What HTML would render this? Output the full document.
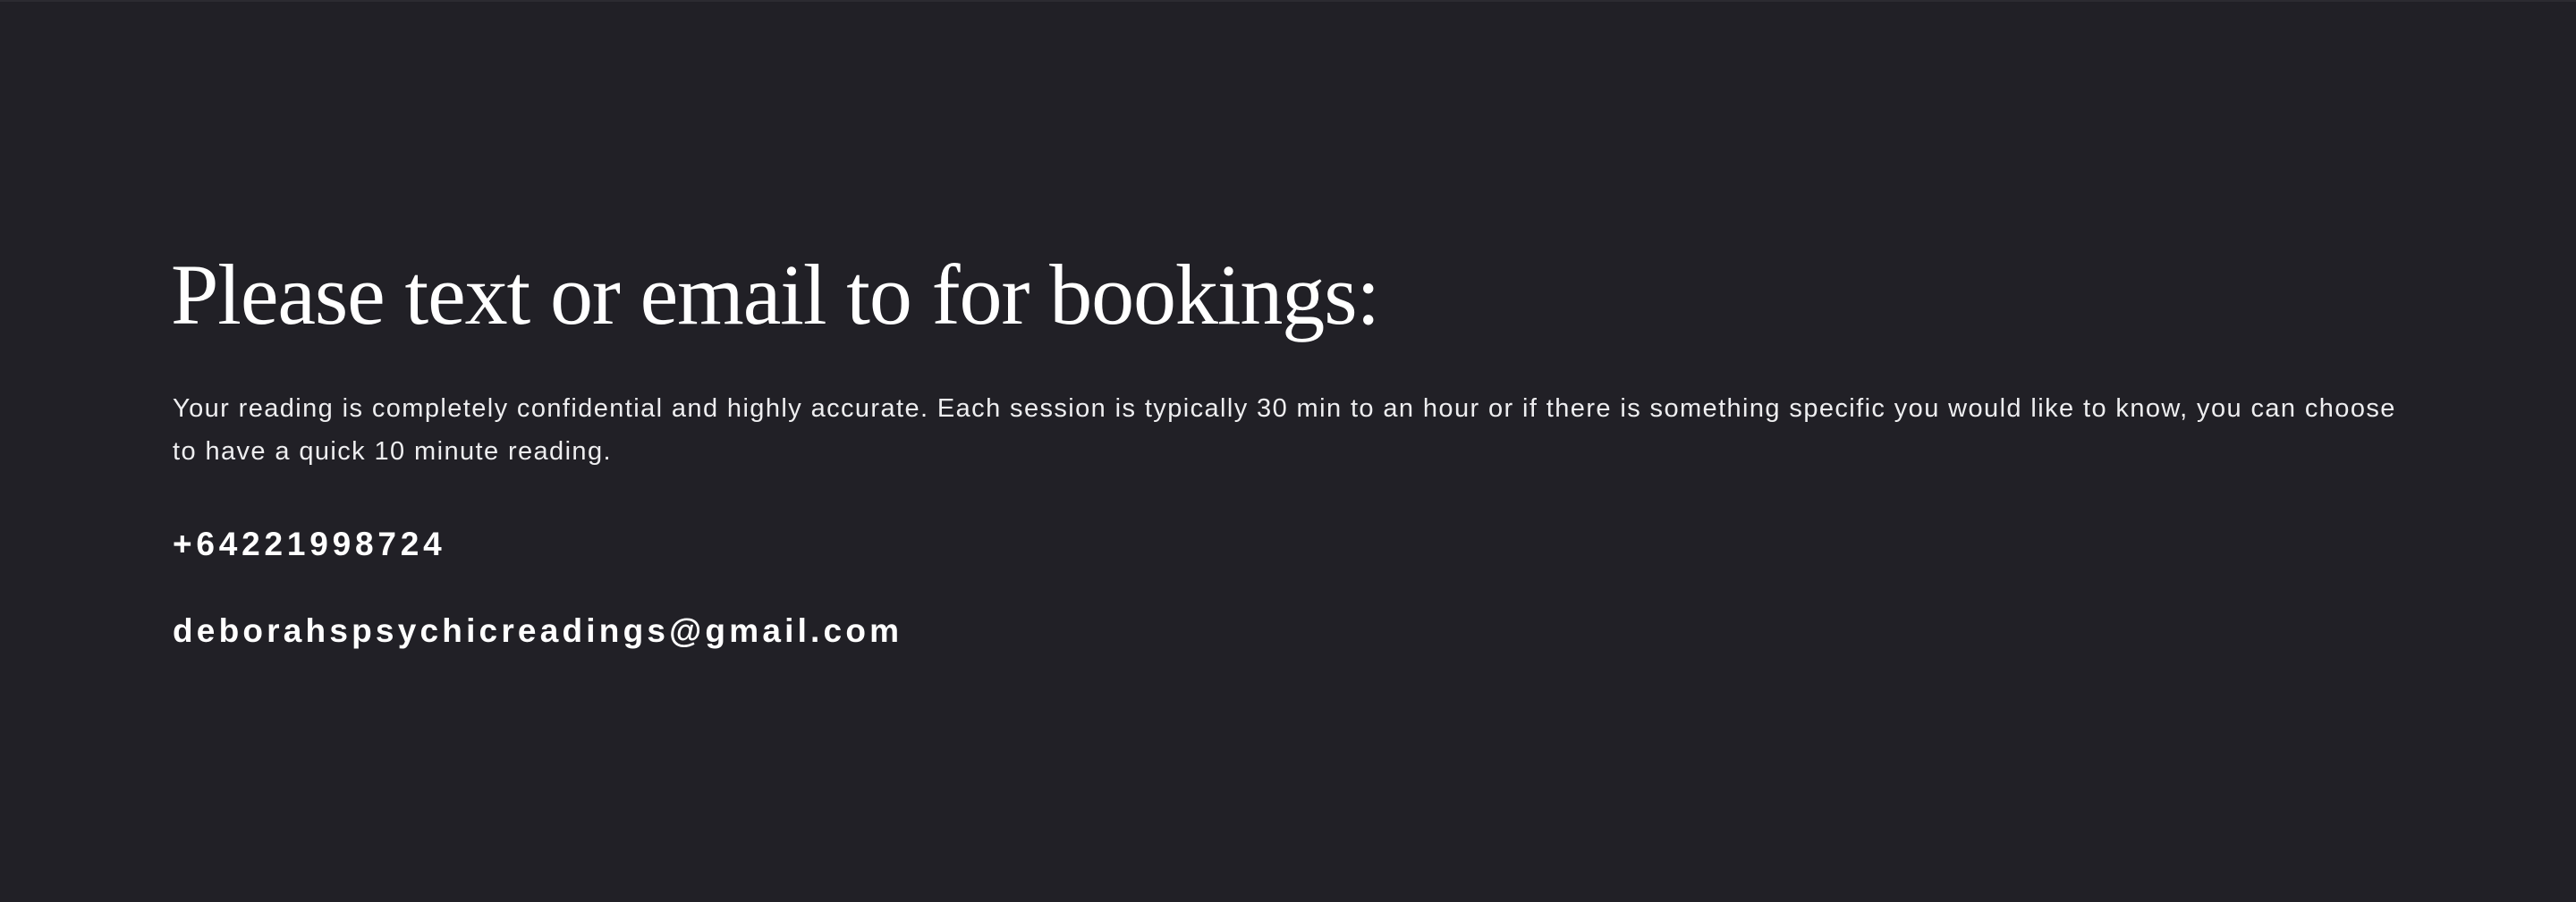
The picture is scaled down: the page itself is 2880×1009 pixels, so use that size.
<!DOCTYPE html>
<html><head><meta charset="utf-8"><style>
html,body{margin:0;padding:0;}
body{width:2880px;height:1009px;background:#212026;position:relative;overflow:hidden;color:#fff;}
.top{position:absolute;left:0;top:0;width:2880px;height:2px;background:#2c2b31;}
h1{position:absolute;left:191px;top:265px;margin:0;font-family:"Liberation Serif",serif;font-weight:normal;font-size:96px;line-height:130px;white-space:nowrap;letter-spacing:-1.1px;}
p{position:absolute;left:193px;top:433px;margin:0;width:2700px;font-family:"Liberation Sans",sans-serif;font-size:29px;line-height:48px;color:#eeeef0;letter-spacing:1.4px;word-spacing:0px;white-space:nowrap;}
.ph{position:absolute;left:193px;top:587px;margin:0;font-family:"Liberation Sans",sans-serif;font-weight:bold;font-size:37px;letter-spacing:4.8px;line-height:44px;}
.em{position:absolute;left:193px;top:684px;margin:0;font-family:"Liberation Sans",sans-serif;font-weight:bold;font-size:37px;letter-spacing:4.2px;line-height:44px;}
</style></head><body>
<div class="top"></div>
<h1>Please text or email to for bookings:</h1>
<p>Your reading is completely confidential and highly accurate. Each session is typically 30 min to an hour or if there is something specific you would like to know, you can choose<br>to have a quick 10 minute reading.</p>
<div class="ph">+64221998724</div>
<div class="em">deborahspsychicreadings@gmail.com</div>
</body></html>
